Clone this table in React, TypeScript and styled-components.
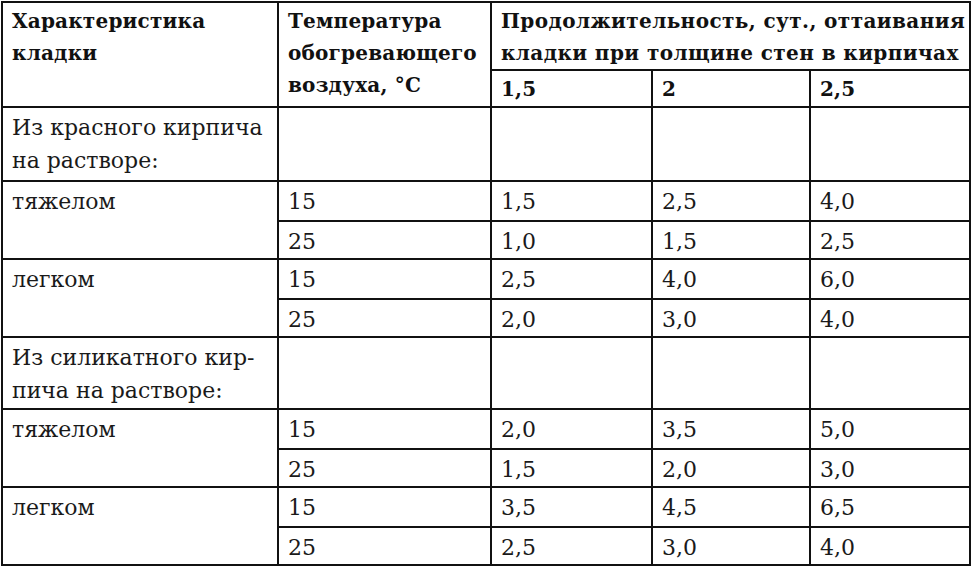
import styled, { createGlobalStyle } from "styled-components";

const GlobalStyle = createGlobalStyle`
  html, body {
    margin: 0;
    padding: 0;
    background: #fff;
  }
`;

const Table = styled.table`
  margin: 1px 0 0 1px;
  width: 969px;
  table-layout: fixed;
  border-collapse: collapse;

  font-family: "DejaVu Serif", "Liberation Serif", serif;
  color: #1a1a1a;
`;

const Col = styled.col<{ $w: number }>`
  width: ${({ $w }) => $w}px;
`;

const Row = styled.tr<{ $h: number }>`
  height: ${({ $h }) => $h}px;
`;

const HeadCell = styled.th<{ $wide?: boolean }>`
  border: 2px solid #111;
  padding: 2px 9px 0;

  vertical-align: top;
  text-align: left;

  font-size: 20px;
  font-weight: bold;
  line-height: 32px;
  letter-spacing: ${({ $wide }) => ($wide ? "0.4px" : "0.2px")};
  color: #111;
  white-space: nowrap;
`;

const Cell = styled.td`
  border: 2px solid #111;
  padding: 3px 9px 0;

  vertical-align: top;

  font-size: 22px;
  line-height: 33px;
  white-space: nowrap;
`;

type Sub = { temp: string; values: [string, string, string] };
type Kind = { name: string; rows: [Sub, Sub] };
type Group = { title: React.ReactNode; height: number; kinds: Kind[] };

const groups: Group[] = [
  {
    title: <>Из красного кирпича<br />на растворе:</>,
    height: 74,
    kinds: [
      {
        name: "тяжелом",
        rows: [
          { temp: "15", values: ["1,5", "2,5", "4,0"] },
          { temp: "25", values: ["1,0", "1,5", "2,5"] },
        ],
      },
      {
        name: "легком",
        rows: [
          { temp: "15", values: ["2,5", "4,0", "6,0"] },
          { temp: "25", values: ["2,0", "3,0", "4,0"] },
        ],
      },
    ],
  },
  {
    title: <>Из силикатного кир-<br />пича на растворе:</>,
    height: 72,
    kinds: [
      {
        name: "тяжелом",
        rows: [
          { temp: "15", values: ["2,0", "3,5", "5,0"] },
          { temp: "25", values: ["1,5", "2,0", "3,0"] },
        ],
      },
      {
        name: "легком",
        rows: [
          { temp: "15", values: ["3,5", "4,5", "6,5"] },
          { temp: "25", values: ["2,5", "3,0", "4,0"] },
        ],
      },
    ],
  },
];

function App() {
  return (
    <>
      <GlobalStyle />
      <Table>
        <colgroup>
          <Col $w={276} />
          <Col $w={213} />
          <Col $w={161} />
          <Col $w={158} />
          <Col $w={160} />
        </colgroup>
        <thead>
          <Row $h={68}>
            <HeadCell rowSpan={2}>Характеристика<br />кладки</HeadCell>
            <HeadCell rowSpan={2}>Температура<br />обогревающего<br />воздуха, °С</HeadCell>
            <HeadCell colSpan={3} $wide>
              Продолжительность, сут., оттаивания<br />кладки при толщине стен в кирпичах
            </HeadCell>
          </Row>
          <Row $h={37}>
            <HeadCell>1,5</HeadCell>
            <HeadCell>2</HeadCell>
            <HeadCell>2,5</HeadCell>
          </Row>
        </thead>
        <tbody>
          {groups.map((g, gi) => (
            <GroupRows key={gi} group={g} />
          ))}
        </tbody>
      </Table>
    </>
  );
}

function GroupRows({ group }: { group: Group }) {
  return (
    <>
      <Row $h={group.height}>
        <Cell>{group.title}</Cell>
        <Cell />
        <Cell />
        <Cell />
        <Cell />
      </Row>
      {group.kinds.map((k) =>
        k.rows.map((r, ri) => (
          <Row $h={ri === 0 ? 40 : 38} key={k.name + r.temp}>
            {ri === 0 && <Cell rowSpan={2}>{k.name}</Cell>}
            <Cell>{r.temp}</Cell>
            {r.values.map((v, vi) => (
              <Cell key={vi}>{v}</Cell>
            ))}
          </Row>
        ))
      )}
    </>
  );
}

export default App;
